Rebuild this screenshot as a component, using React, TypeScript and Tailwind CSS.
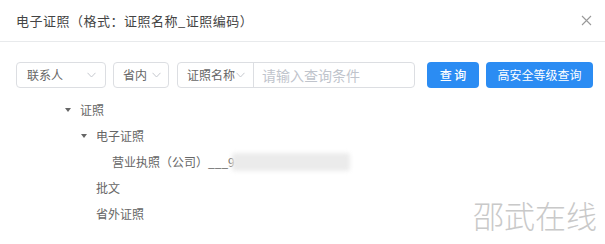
import React from 'react'

const font = { fontFamily: '"Noto Sans CJK SC", "Noto Sans", sans-serif' }

function Chevron({ className = '' }: { className?: string }) {
  return (
    <svg width="9" height="6" viewBox="0 0 9 6" className={className}>
      <path d="M0.5 0.8 L4.5 5 L8.5 0.8" fill="none" stroke="#c5c8ce" strokeWidth="1" />
    </svg>
  )
}

function Caret() {
  return (
    <span className="flex h-[16px] w-[16px] items-center justify-center">
      <span className="h-0 w-0 border-l-[3px] border-r-[3px] border-t-[4px] border-l-transparent border-r-transparent border-t-[#666]" />
    </span>
  )
}

type Node = { label: string; level: number; open?: boolean; blur?: boolean }

const tree: Node[] = [
  { label: '证照', level: 0, open: true },
  { label: '电子证照', level: 1, open: true },
  { label: '营业执照（公司）___9', level: 2, blur: true },
  { label: '批文', level: 1 },
  { label: '省外证照', level: 1 },
]

export default function App() {
  return (
    <div className="relative h-[244px] w-[605px] overflow-hidden bg-white" style={font}>
      {/* 标题栏 */}
      <div className="flex h-[42px] items-center justify-between border-b border-[#e8eaec] pl-4 pr-[13px]">
        <span className="text-[13px] tracking-[0.5px] text-[#444]">电子证照（格式：证照名称_证照编码）</span>
        <svg width="11" height="11" viewBox="0 0 11 11">
          <path d="M1 1 L10 10 M10 1 L1 10" stroke="#999" strokeWidth="1.1" />
        </svg>
      </div>

      {/* 查询条件 */}
      <div className="mt-5 flex h-[26px] items-stretch pl-4">
        <div className="flex w-[90px] items-center justify-between rounded-[4px] border border-[#dcdee2] pl-[10px] pr-[9px] text-[12px] text-[#666]">
          <span>联系人</span>
          <Chevron />
        </div>
        <div className="ml-[7px] flex w-[56px] items-center gap-[5px] rounded-[4px] border border-[#dcdee2] pl-[9px] text-[12px] text-[#666]">
          <span>省内</span>
          <Chevron />
        </div>
        <div className="ml-[8px] flex w-[238px] items-stretch rounded-[4px] border border-[#dcdee2]">
          <div className="flex w-[76px] items-center border-r border-[#dcdee2] pl-[9px] text-[12px] text-[#666]">
            <span>证照名称</span>
            <Chevron className="ml-[1px]" />
          </div>
          <div className="flex flex-1 items-center pl-[8px] text-[14px] text-[#c0c4cc]">请输入查询条件</div>
        </div>
        <button className="ml-[12px] w-[52px] rounded-[4px] bg-[#2b8cf3] text-[12px] font-medium text-white">查 询</button>
        <button className="ml-[7px] w-[107px] rounded-[4px] bg-[#2b8cf3] text-[12px] text-white">高安全等级查询</button>
      </div>

      {/* 树 */}
      <div className="mt-[9px]">
        {tree.map((n) => (
          <div
            key={n.label}
            className="relative flex h-[26px] items-center text-[12px] text-[#666]"
            style={{ paddingLeft: 60 + n.level * 16 }}
          >
            {n.open ? <Caret /> : <span className="w-[16px]" />}
            <span className="ml-[4px]">{n.label}</span>
            {n.blur && (
              <span className="absolute left-[232px] top-[4px] h-[18px] w-[118px] rounded-[3px] bg-[#ebebeb] blur-[2px]" />
            )}
          </div>
        ))}
      </div>

      {/* 水印 */}
      <div className="absolute left-[473px] top-[199px] text-[31px] font-light leading-none text-[#c9c9c9]">
        邵武在线
      </div>
    </div>
  )
}
